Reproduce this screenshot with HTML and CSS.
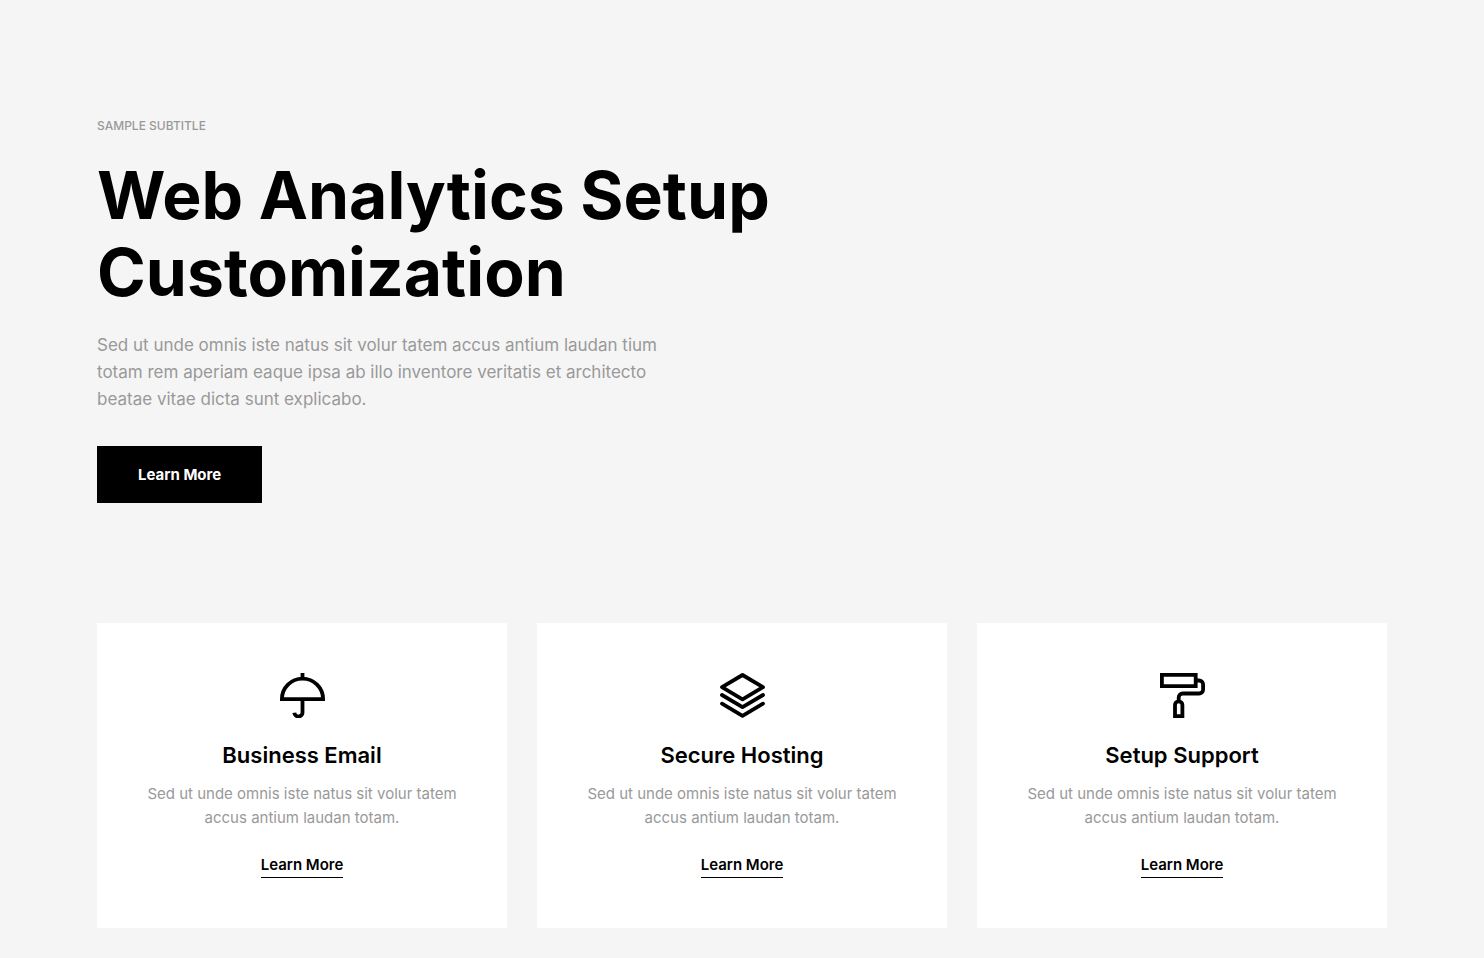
FILE: index.html
```html
<!DOCTYPE html>
<html lang="en">
<head>
<meta charset="utf-8">
<meta name="viewport" content="width=device-width, initial-scale=1">
<title>Web Analytics Setup Customization</title>
<link rel="stylesheet" href="styles.css">
</head>
<body>
<main class="container">
  <section class="hero">
    <p class="subtitle">SAMPLE SUBTITLE</p>
    <h1 class="hero-title">Web Analytics Setup<br>Customization</h1>
    <p class="hero-text">Sed ut unde omnis iste natus sit volur tatem accus antium laudan tium<br>totam rem aperiam eaque ipsa ab illo inventore veritatis et architecto<br>beatae vitae dicta sunt explicabo.</p>
    <a class="button" href="#services">Learn More</a>
  </section>
  <section class="cards" id="services">
    <article class="card">
      <svg class="icon" viewBox="0 0 45 45" aria-hidden="true">
        <path d="M22.500 0v5M1.900 26.200A20.600 20.600 0 0 1 43.100 26.200ZM22.500 27v12a4.100 4.100 0 0 1-8.200.800"/>
      </svg>
      <h2 class="card-title">Business Email</h2>
      <p class="card-text">Sed ut unde omnis iste natus sit volur tatem<br>accus antium laudan totam.</p>
      <a class="link" href="#email">Learn More</a>
    </article>
    <article class="card">
      <svg class="icon icon-round" viewBox="0 0 45 45" aria-hidden="true">
        <path d="M22.500 2 43 14.200 22.500 26.400 2 14.200ZM2 22l20.500 12.200L43 22M2 30.700l20.500 12.200L43 30.700"/>
      </svg>
      <h2 class="card-title">Secure Hosting</h2>
      <p class="card-text">Sed ut unde omnis iste natus sit volur tatem<br>accus antium laudan totam.</p>
      <a class="link" href="#hosting">Learn More</a>
    </article>
    <article class="card">
      <svg class="icon" viewBox="0 0 45 45" aria-hidden="true">
        <path d="M1.900 1.900h33.800v11.200H1.900ZM36 7.500h3.100a4 4 0 0 1 4 4v5a4 4 0 0 1-4 4H22.700a4 4 0 0 0-4 4V28M15 43.100V32a3.700 3.700 0 0 1 7.400 0v11.100Z"/>
      </svg>
      <h2 class="card-title">Setup Support</h2>
      <p class="card-text">Sed ut unde omnis iste natus sit volur tatem<br>accus antium laudan totam.</p>
      <a class="link" href="#support">Learn More</a>
    </article>
  </section>
</main>
</body>
</html>
```
FILE: styles.css
```css
* {
  box-sizing: border-box;
}

body {
  margin: 0;
  background: #f5f5f5;
  color: #000;
  font-family: Inter, "Open Sans", sans-serif;
}

h1,
h2,
p {
  margin: 0;
}

.container {
  max-width: 1320px;
  margin: 0 auto;
  padding: 116px 15px 30px;
}

.hero {
  display: flex;
  flex-direction: column;
  align-items: flex-start;
}

.subtitle {
  color: #999;
  font-size: 12px;
  font-weight: 500;
  line-height: 20px;
}

.hero-title {
  margin-top: 21px;
  font-size: 66px;
  font-weight: 700;
  line-height: 77px;
}

.hero-text {
  margin-top: 21px;
  color: #999;
  font-size: 17px;
  line-height: 27px;
}

.button {
  margin-top: 33px;
  padding: 16px 41px;
  background: #000;
  color: #fff;
  font-size: 15px;
  font-weight: 700;
  line-height: 25px;
  text-decoration: none;
}

.cards {
  display: grid;
  grid-template-columns: repeat(3, 1fr);
  gap: 30px;
  margin-top: 120px;
}

.card {
  display: flex;
  flex-direction: column;
  align-items: center;
  padding: 50px 30px;
  background: #fff;
  text-align: center;
}

.icon {
  width: 45px;
  height: 45px;
  fill: none;
  stroke: #000;
  stroke-width: 3.8;
}

.icon-round {
  stroke-linejoin: round;
  stroke-linecap: round;
}

.card-title {
  margin-top: 22px;
  font-size: 22px;
  font-weight: 600;
  line-height: 30px;
}

.card-text {
  margin-top: 12px;
  color: #999;
  font-size: 15px;
  line-height: 24px;
}

.link {
  margin-top: 22px;
  border-bottom: 1px solid #000;
  color: #000;
  font-size: 15px;
  font-weight: 600;
  line-height: 25px;
  text-decoration: none;
}

@media (max-width: 900px) {
  .cards {
    grid-template-columns: 1fr;
  }

  .hero-title {
    font-size: 44px;
    line-height: 52px;
  }
}
```
